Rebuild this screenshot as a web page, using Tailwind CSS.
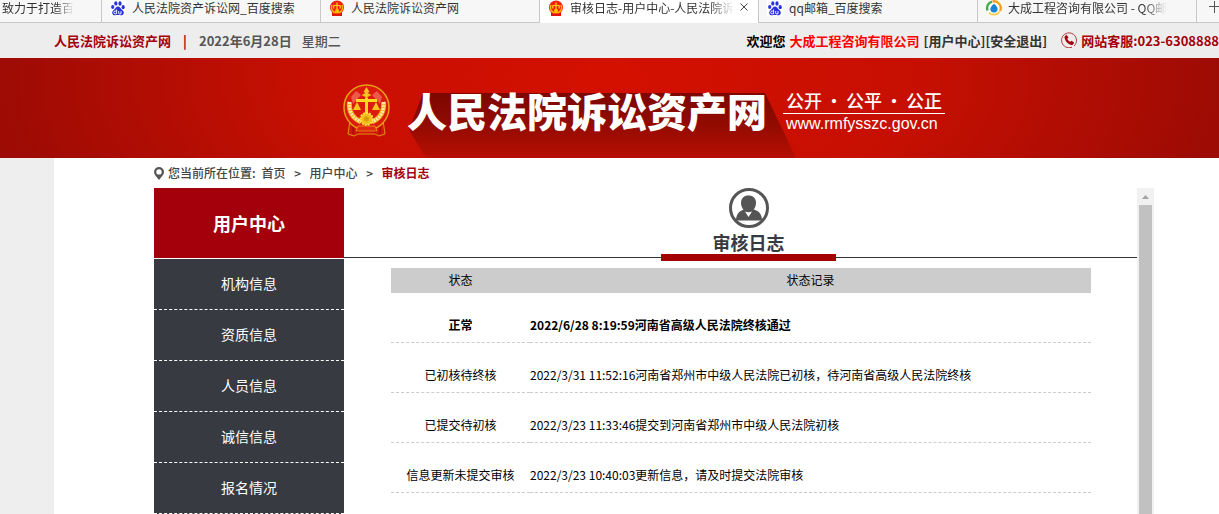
<!DOCTYPE html>
<html lang="zh-CN">
<head>
  <meta charset="UTF-8" />
  <meta name="viewport" content="width=device-width, initial-scale=1" />
  <title>审核日志-用户中心-人民法院诉讼资产网</title>
  <script src="https://cdn.jsdelivr.net/npm/@tailwindcss/browser@4"></script>
</head>
<body class="bg-[#eeeeee] min-h-screen flex flex-col overflow-x-hidden text-xs font-['Noto_Sans_CJK_SC',sans-serif]">

  <!-- shared icons -->
  <svg class="hidden">
    <symbol id="paw" viewBox="0 0 16 16">
      <rect width="16" height="16" fill="#fff" />
      <g fill="#2a32e0">
        <ellipse cx="5.8" cy="3.4" rx="1.6" ry="2.2" />
        <ellipse cx="10" cy="3.5" rx="1.6" ry="2.2" />
        <ellipse cx="2.7" cy="7" rx="1.6" ry="2.1" />
        <ellipse cx="13.2" cy="7.2" rx="1.6" ry="2.1" />
        <path d="M8 6.6c1.800 0 2.500 1.700 3.700 2.800 1.300 1.100 2.300 2 2.100 3.700-.2 1.800-1.700 2.500-3.200 2.200-1.700-.3-3.500-.3-5.200 0-1.500.3-3-.4-3.200-2.200-.2-1.700.8-2.600 2.100-3.700C5.500 8.300 6.200 6.600 8 6.600z" />
      </g>
      <path d="M6.600 9.500v4.300H5.100a1.200 1.200 0 0 1 0-2.700h1.500M8.700 11v2.300q0 .6.600.6h1.700V11" fill="none" stroke="#fff" stroke-width=".9" />
    </symbol>
    <symbol id="court" viewBox="0 0 16 16">
      <path d="M3 12h10v4H3z" fill="#e0140a" />
      <circle cx="8" cy="7.500" r="7" fill="#f0200c" />
      <path d="M3 5a5.800 5.800 0 0 0 2.500 7.500h5A5.800 5.800 0 0 0 13 5" fill="none" stroke="#ffb400" stroke-width="1.600" />
      <path d="M8 2.500v8M4.500 5.500h7M4.800 5.500v3M11.200 5.500v3" stroke="#ffd21a" stroke-width="1.200" />
      <circle cx="8" cy="10.800" r="2" fill="#ffc400" />
    </symbol>
  </svg>

  <!-- browser tabs -->
  <nav class="flex h-[23px] overflow-hidden bg-[#f7f7f7] text-[#333] leading-[15px] whitespace-nowrap">
    <button class="flex items-start w-[102px] shrink-0 pl-0.5 border-r border-b border-[#c8c8c8]">
      <span class="mask-r-from-75%">致力于打造百</span>
    </button>
    <button class="flex items-start gap-1.5 w-[219px] shrink-0 pl-2 border-r border-b border-[#c8c8c8]">
      <svg class="size-4"><use href="#paw" /></svg>
      <span>人民法院资产诉讼网_百度搜索</span>
    </button>
    <button class="flex items-start gap-1.5 w-[219px] shrink-0 pl-2 border-r border-b border-[#c8c8c8]">
      <svg class="size-4"><use href="#court" /></svg>
      <span>人民法院诉讼资产网</span>
    </button>
    <button class="flex items-start gap-1.5 w-[219px] shrink-0 pl-2 bg-white border-r border-[#c8c8c8]">
      <svg class="size-4"><use href="#court" /></svg>
      <span class="mask-r-from-85%">审核日志-用户中心-人民法院诉</span>
      <svg class="size-2 mt-[3px]" viewBox="0 0 8 8" stroke="#444"><path d="M.5.5l7 7M7.500.5l-7 7" /></svg>
    </button>
    <button class="flex items-start gap-1.5 w-[219px] shrink-0 pl-2 border-r border-b border-[#c8c8c8]">
      <svg class="size-4"><use href="#paw" /></svg>
      <span>qq邮箱_百度搜索</span>
    </button>
    <button class="flex items-start gap-1.5 w-[219px] shrink-0 pl-2 border-r border-b border-[#c8c8c8]">
      <svg class="size-4" viewBox="0 0 16 16" fill="none">
        <circle cx="8" cy="8" r="8" fill="#fff" />
        <path d="M1.600 10.500A6.700 6.700 0 0 1 6 1.600" stroke="#3fae49" stroke-width="2.400" />
        <path d="M6.500 1.500a6.700 6.700 0 0 1 7.500 9.500" stroke="#f7a11b" stroke-width="2.400" />
        <path d="M13.500 11.500a6.500 6.500 0 0 1-10.500 1" stroke="#f9c846" stroke-width="1.800" />
        <path d="M8 3.800c2.200 1.600 3.800 3.700 3.700 5.800A3.600 3.600 0 0 1 8 12.500a3.600 3.600 0 0 1-3.700-2.900C4.200 7.500 5.800 5.400 8 3.800z" fill="#1c84d8" />
      </svg>
      <span class="mask-r-from-85%">大成工程咨询有限公司 - QQ邮</span>
    </button>
    <button class="flex grow items-start pl-3 pt-px border-b border-[#c8c8c8]" aria-label="新标签页">
      <svg class="w-3 h-3 shrink-0" viewBox="0 0 12 12" stroke="#555"><path d="M0 5.500h12M5.500 0v12" /></svg>
    </button>
  </nav>

  <!-- top bar -->
  <div class="flex items-center justify-between h-[35px] pl-[54px] overflow-hidden bg-[#ededed] text-[13px] font-bold whitespace-nowrap">
    <div class="flex items-center text-[#555]">
      <a href="#" class="text-[#a3000b]">人民法院诉讼资产网</a>
      <span class="w-7 text-center text-[#a3000b]">|</span>
      <span>2022年6月28日</span>
      <span class="ml-2.5 font-medium">星期二</span>
    </div>
    <div class="flex items-center">
      <span class="text-black">欢迎您</span>
      <a href="#" class="ml-1 text-[#ff0000]">大成工程咨询有限公司</a>
      <a href="#" class="ml-1 text-[#333]">[用户中心]</a>
      <a href="#" class="text-[#333]">[安全退出]</a>
      <svg class="size-4 ml-3.5 mr-1" viewBox="0 0 16 16" fill="none">
        <path d="M11 15.200A7.500 7.500 0 1 1 15.500 8c0 2.500-.8 4.500-2.500 6" stroke="#b5403f" />
        <path d="M3.800 4.200l1.700-1.400 2 2.700-1.200 1.200c.5 1.300 1.600 2.400 3 3.100l1.300-1 2.600 2-1.500 1.900c-.7.600-2 .300-3.400-.5C5.700 10.800 4 8.500 3.600 6c-.1-.7 0-1.400.2-1.800z" fill="#a3000b" />
      </svg>
      <span class="text-[#a3000b]">网站客服:023-6308888</span>
    </div>
  </div>

  <!-- banner -->
  <header class="flex h-[100px] pl-[343px] overflow-hidden bg-[radial-gradient(ellipse_620px_300px_at_50%_20%,#d41000,#c60f02_50%,#9c0b04)] text-white whitespace-nowrap">
    <svg class="w-[47px] h-[53px] mt-[26px] shrink-0" viewBox="0 0 47 53">
      <path d="M7 36h33l2 14-6 2-4-2H15l-4 2-6-2z" fill="#d3160c" stroke="#e0920f" />
      <path d="M10 42v8M15 44v5M32 44v5M37 42v8" stroke="#8e0905" />
      <circle cx="23.500" cy="23.500" r="22.500" fill="#dc1a0e" stroke="#e8a015" stroke-width="1.500" />
      <path d="M8 13l5-6 5 4-8 9zM39 13l-5-6-5 4 8 9z" fill="#ee5a48" />
      <path d="M6.500 18c-1 10 3 16 11.500 20M40.500 18c1 10-3 16-11.500 20" fill="none" stroke="#f5ad22" stroke-width="5" />
      <path d="M6.500 18c-1 10 3 16 11.500 20M40.500 18c1 10-3 16-11.500 20" fill="none" stroke="#ffe9a8" stroke-width="3" stroke-dasharray="2 1" />
      <path d="M23.500 3l3 5-2 1 4 2-4 2v4h-2v-4l-4-2 4-2-2-1z" fill="#f7c51c" />
      <path d="M22 14h3v17h-3zM13 15h21v3H13z" fill="#ffd91f" />
      <path d="M14 18l-4 8h8zM33 18l-4 8h8z" fill="#f7c51c" />
      <circle cx="23.500" cy="35" r="6" fill="#f5bd17" stroke="#ffe04a" stroke-width="2" stroke-dasharray="2 1" />
      <circle cx="23.500" cy="35" r="2.500" fill="#d99a0b" />
      <path d="M15 42h17l2 5H13z" fill="#e02a12" stroke="#f0a618" stroke-width=".7" />
    </svg>
    <div class="relative ml-[17px] h-full">
      <!-- long shadow under the site name -->
      <svg class="absolute left-0 top-[35px] w-[392px] h-[65px]" viewBox="0 0 392 65">
        <linearGradient id="fall" x1="0" y1="0" x2="0" y2="1">
          <stop offset="0" stop-color="#7c0700" />
          <stop offset=".5" stop-color="#930b01" />
          <stop offset="1" stop-color="#b80e02" />
        </linearGradient>
        <path d="M16 0H358l31 65H19L2 37z" fill="url(#fall)" />
      </svg>
      <h1 class="relative mt-8 text-[40px] leading-[40px] font-black">人民法院诉讼资产网</h1>
    </div>
    <div class="w-[162px] ml-4 mt-[30px]">
      <p class="flex justify-between h-[26px] px-[3px] text-lg leading-6 font-medium border-b border-white">
        <span>公开</span><span>·</span><span>公平</span><span>·</span><span>公正</span>
      </p>
      <p class="px-[3px] font-['Liberation_Sans',sans-serif] text-base leading-5">www.rmfysszc.gov.cn</p>
    </div>
  </header>

  <div class="grow flex flex-col ml-[54px] pl-[100px] pr-[65px] bg-white">
    <!-- breadcrumb -->
    <div class="flex items-center h-[30px] text-[#444] font-medium whitespace-nowrap">
      <svg class="w-2.5 h-[13px] mr-1" viewBox="0 0 10 13">
        <path d="M5 0a5 5 0 0 1 5 5c0 2.500-2.500 5-5 8-2.500-3-5-5.500-5-8a5 5 0 0 1 5-5zm0 2.200a2.700 2.700 0 1 0 0 5.400 2.700 2.700 0 0 0 0-5.400z" fill="#555" />
      </svg>
      <span>您当前所在位置:</span>
      <a href="#" class="ml-1.5">首页</a>
      <span class="w-6 text-center">&gt;</span>
      <a href="#">用户中心</a>
      <span class="w-6 text-center">&gt;</span>
      <a href="#" class="text-[#a3000b] font-bold">审核日志</a>
    </div>

    <div class="grow flex">
      <!-- side menu -->
      <aside class="w-[190px] shrink-0 text-center text-white">
        <h2 class="h-[70px] mb-px bg-[#a3000b] text-lg leading-[70px] font-bold">用户中心</h2>
        <ul class="bg-[#383a42] text-sm leading-[48px]">
          <li class="pb-0.5 border-b border-dashed border-white"><a href="#">机构信息</a></li>
          <li class="pb-0.5 border-b border-dashed border-white"><a href="#">资质信息</a></li>
          <li class="pb-0.5 border-b border-dashed border-white"><a href="#">人员信息</a></li>
          <li class="pb-0.5 border-b border-dashed border-white"><a href="#">诚信信息</a></li>
          <li class="pb-0.5 border-b border-dashed border-white"><a href="#">报名情况</a></li>
        </ul>
      </aside>

      <main class="grow">
        <div class="relative flex flex-col items-center h-[70px] pl-4 border-b border-[#333]">
          <svg class="size-10 shrink-0" viewBox="0 0 40 40">
            <circle cx="20" cy="20" r="18.500" fill="#fff" stroke="#555" stroke-width="3" />
            <path d="M7 32.500c0-6 3-9.500 8-11h10c5 1.500 8 5 8 11z" fill="#555" />
            <path d="M12 15c0-5 3-7.500 7.500-7.500S27 10 27 15s-3.500 9-7.500 9-7.500-4-7.500-9z" fill="#555" />
            <path d="M16 23.500q3.500 1.500 7 0l-3.500 5.500z" fill="#fff" />
          </svg>
          <h3 class="text-lg leading-7 font-bold text-[#383a42]">审核日志</h3>
          <div class="absolute top-[66px] w-[175px] h-[7px] bg-[#a30000]"></div>
        </div>

        <div class="pl-[47px] pr-[46px] pt-2.5">
          <table class="w-full table-fixed border-separate border-spacing-0 text-black">
            <thead>
              <tr class="h-[25px] bg-[#cccccc]">
                <th class="w-[139px] pb-0.5 font-normal">状态</th>
                <th class="pb-0.5 font-normal">状态记录</th>
              </tr>
            </thead>
            <tbody class="whitespace-nowrap">
              <tr class="h-[50px] font-bold">
                <td class="pt-[15px] text-center border-b border-dashed border-[#ccc]">正常</td>
                <td class="pt-[15px] border-b border-dashed border-[#ccc]">2022/6/28 8:19:59河南省高级人民法院终核通过</td>
              </tr>
              <tr class="h-[50px]">
                <td class="pt-[15px] text-center border-b border-dashed border-[#ccc]">已初核待终核</td>
                <td class="pt-[15px] border-b border-dashed border-[#ccc]">2022/3/31 11:52:16河南省郑州市中级人民法院已初核，待河南省高级人民法院终核</td>
              </tr>
              <tr class="h-[50px]">
                <td class="pt-[15px] text-center border-b border-dashed border-[#ccc]">已提交待初核</td>
                <td class="pt-[15px] border-b border-dashed border-[#ccc]">2022/3/23 11:33:46提交到河南省郑州市中级人民法院初核</td>
              </tr>
              <tr class="h-[50px]">
                <td class="pt-[15px] text-center border-b border-dashed border-[#ccc]">信息更新未提交审核</td>
                <td class="pt-[15px] border-b border-dashed border-[#ccc]">2022/3/23 10:40:03更新信息，请及时提交法院审核</td>
              </tr>
            </tbody>
          </table>
        </div>
      </main>

      <!-- scrollbar -->
      <div class="flex flex-col items-center w-[17px] shrink-0 bg-[#f1f1f1]">
        <svg class="w-[7px] h-[17px]" viewBox="0 0 7 17"><path d="M3.500 7L7 11H0z" fill="#a3a3a3" /></svg>
        <div class="grow w-[13px] bg-[#c1c1c1]"></div>
      </div>
    </div>
  </div>
</body>
</html>
